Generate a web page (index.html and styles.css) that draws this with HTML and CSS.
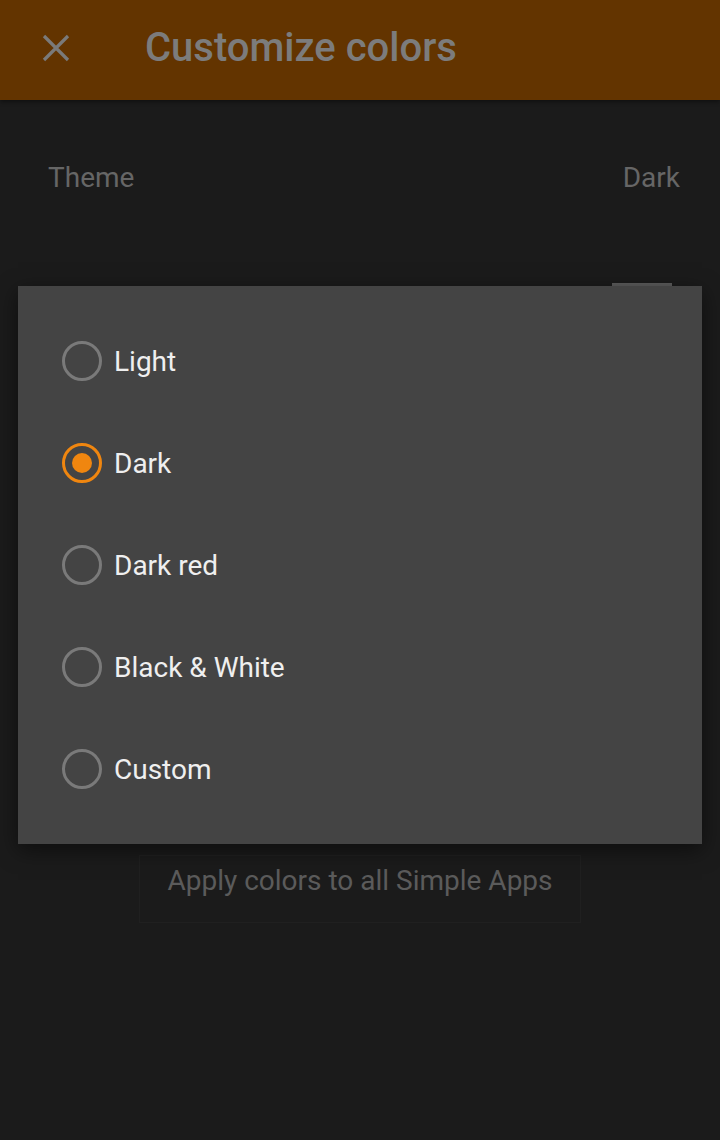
FILE: index.html
```html
<!DOCTYPE html>
<html>
<head>
<meta charset="utf-8">
<link rel="stylesheet" href="styles.css">
</head>
<body>
<div class="screen">
  <header class="appbar">
    <svg class="close" width="28" height="28" viewBox="0 0 28 28"><path d="M2 2 L26 26 M26 2 L2 26" stroke="#7a7a7a" stroke-width="3.2" fill="none"/></svg>
    <div class="title">Customize colors</div>
  </header>
  <main class="content">
    <div class="row">
      <span class="label">Theme</span>
      <span class="value">Dark</span>
    </div>
    <div class="strip-wrap"><div class="strip"></div></div>
    <div class="apply-wrap">
      <div class="apply">Apply colors to all Simple Apps</div>
    </div>
  </main>
  <div class="dialog">
    <div class="option"><span class="radio"></span><span class="opt-label">Light</span></div>
    <div class="option"><span class="radio checked"></span><span class="opt-label">Dark</span></div>
    <div class="option"><span class="radio"></span><span class="opt-label">Dark red</span></div>
    <div class="option"><span class="radio"></span><span class="opt-label">Black &amp; White</span></div>
    <div class="option"><span class="radio"></span><span class="opt-label">Custom</span></div>
  </div>
</div>
</body>
</html>
```
FILE: styles.css
```css
* { box-sizing: border-box; }
html, body { margin: 0; padding: 0; }
body {
  width: 720px;
  height: 1140px;
  background: #1b1b1b;
  font-family: Roboto, "Liberation Sans", sans-serif;
  overflow: hidden;
}
.screen {
  position: relative;
  width: 720px;
  height: 1140px;
}
.appbar {
  height: 100px;
  background: #633400;
  display: flex;
  align-items: center;
  padding-left: 42px;
  box-shadow: 0 2px 4px rgba(0,0,0,0.4);
}
.close { display: block; margin-top: -4px; }
.title {
  margin-left: 75px;
  font-size: 40px;
  font-weight: 500;
  color: #7c7c7c;
  margin-top: -6px;
}
.content { padding: 0; }
.row {
  display: flex;
  justify-content: space-between;
  align-items: center;
  padding: 58px 40px 0 48px;
  height: 96px;
  font-size: 28px;
  color: #666666;
}
.strip-wrap {
  display: flex;
  justify-content: flex-end;
  padding-right: 48px;
  margin-top: 87px;
}
.strip {
  width: 60px;
  height: 4px;
  background: #5c5c5c;
}
.apply-wrap {
  display: flex;
  justify-content: center;
  margin-top: 568px;
}
.apply {
  width: 442px;
  height: 68px;
  border: 1px solid #202020;
  font-size: 28px;
  color: #5b5b5b;
  text-align: center;
  padding-top: 8px;
}
.dialog {
  position: absolute;
  left: 18px;
  top: 286px;
  width: 684px;
  height: 558px;
  background: #444444;
  padding-top: 24px;
  box-shadow: 0 6px 20px rgba(0,0,0,0.5);
}
.option {
  display: flex;
  align-items: center;
  height: 102px;
  padding-left: 44px;
}
.radio {
  width: 40px;
  height: 40px;
  border-radius: 50%;
  border: 3px solid #7a7a7a;
  display: flex;
  align-items: center;
  justify-content: center;
}
.radio.checked { border-color: #f0860f; }
.radio.checked::after {
  content: "";
  width: 20px;
  height: 20px;
  border-radius: 50%;
  background: #f0860f;
}
.opt-label {
  margin-left: 12px;
  font-size: 28px;
  color: #efefef;
}
```
